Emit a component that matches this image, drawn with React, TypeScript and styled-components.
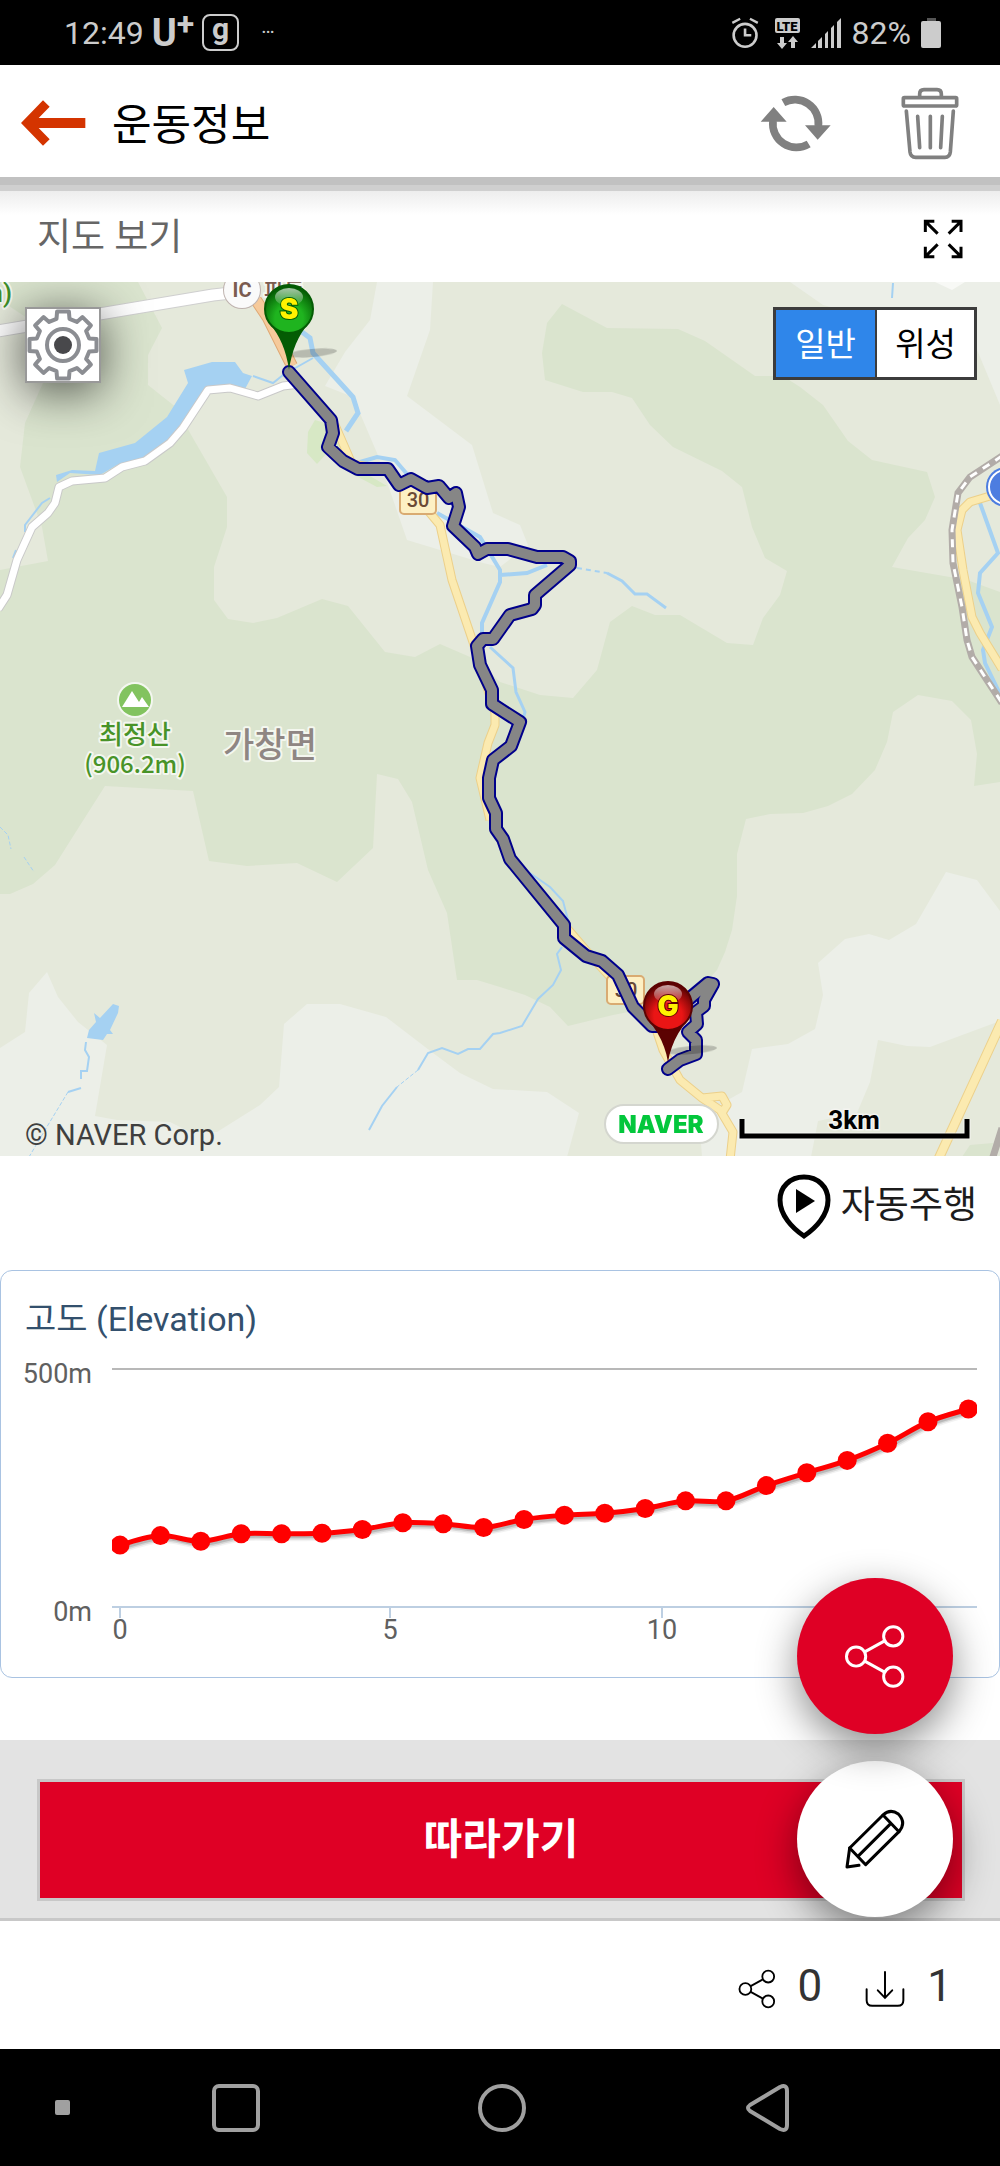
import React, { useState } from "react";
import styled, { createGlobalStyle } from "styled-components";

const sans = `Roboto, "Noto Sans CJK KR", sans-serif`;

const GlobalStyle = createGlobalStyle`
  *, *::before, *::after { box-sizing: border-box; }
  body { margin: 0; background: #fff; font-family: ${sans}; }
  button { font: inherit; color: inherit; padding: 0; border: 0; background: none; cursor: pointer; }
  svg { display: block; }
  h1, h2, p { margin: 0; font-weight: 400; }
`;

const Page = styled.div`
  width: 100%;
`;

/* ---------- status bar ---------- */

const StatusBar = styled.div`
  display: flex;
  justify-content: space-between;
  align-items: center;
  height: 65px;
  padding: 0 58px 0 64px;
  background: #000;
  color: #ccc;
  font-size: 32px;
  line-height: 40px;
`;

const StatusGroup = styled.div<{ $gap: number }>`
  display: flex;
  align-items: center;
  gap: ${(p) => p.$gap}px;
`;

const Carrier = styled.span`
  display: flex;
  align-items: flex-start;
  font-size: 38px;
  font-weight: 700;
  line-height: 40px;
`;

const CarrierPlus = styled.span`
  font-size: 32px;
  line-height: 22px;
`;

const AppBadge = styled.span`
  width: 37px;
  height: 37px;
  border: 2px solid #ccc;
  border-radius: 8px;
  font-size: 30px;
  font-weight: 700;
  line-height: 26px;
  text-align: center;
`;

const More = styled.span`
  padding: 0 0 14px 14px;
  font-size: 20px;
  line-height: 24px;
`;

/* ---------- header ---------- */

const Header = styled.header`
  display: flex;
  align-items: center;
  height: 120px;
  padding: 4px 41px 0 20px;
  border-bottom: 8px solid #c1c1c1;
`;

const Title = styled.h1`
  flex: 1;
  padding: 4px 0 0 24px;
  color: #000;
  font-size: 43px;
  line-height: 60px;
`;

const HeaderActions = styled.div`
  display: flex;
  align-items: center;
  gap: 69px;
`;

const SectionBar = styled.div`
  display: flex;
  justify-content: space-between;
  align-items: center;
  height: 97px;
  padding: 4px 37px 0;
  border-top: 6px solid #cfcfcf;
  background: linear-gradient(#ededed, #fff 24px);
`;

const SectionTitle = styled.h2`
  height: 50px;
  color: #666;
  font-size: 37px;
  line-height: 48px;
`;

/* ---------- map ---------- */

const MapBox = styled.section`
  position: relative;
  overflow: hidden;
`;

const MapSvg = styled.svg`
  width: 100%;
  height: auto;
`;

const SettingsButton = styled.button`
  position: absolute;
  top: 25px;
  left: 25px;
  width: 76px;
  height: 76px;
  border: 2px solid #999;
  background: #fff;
  box-shadow: 0 8px 48px rgba(0, 0, 0, 0.65);
`;

const MapTypes = styled.div`
  position: absolute;
  top: 25px;
  right: 23px;
  display: flex;
  border: 3px solid #3c3c3c;
`;

const MapType = styled.button<{ $on: boolean }>`
  width: 99px;
  height: 67px;
  padding-top: 2px;
  background: ${(p) => (p.$on ? "#2f86ea" : "#fff")};
  color: ${(p) => (p.$on ? "#fff" : "#000")};
  font-size: 33px;
  line-height: 48px;

  & + & {
    border-left: 2px solid #3c3c3c;
  }
`;

const Copyright = styled.p`
  position: absolute;
  left: 25px;
  bottom: 4px;
  color: #3f3f3f;
  font-size: 29px;
  line-height: 34px;
`;

const AutoRow = styled.div`
  display: flex;
  justify-content: flex-end;
  height: 114px;
  padding: 0 23px 14px;
`;

const AutoButton = styled.button`
  display: flex;
  align-items: center;
  gap: 10px;
  color: #1c1c1c;
  font-size: 37px;
  line-height: 48px;
`;

/* ---------- elevation ---------- */

const Card = styled.section`
  margin-bottom: 62px;
  padding-top: 26px;
  border: 1px solid #a9c3e2;
  border-radius: 12px;
`;

const CardTitle = styled.h2`
  padding-left: 24px;
  color: #33506d;
  font-size: 34px;
  line-height: 44px;
`;

const ChartSvg = styled.svg`
  width: 100%;
  height: auto;
`;

/* ---------- bottom ---------- */

const Content = styled.main`
  position: relative;
  overflow: hidden;
`;

const FollowBar = styled.div`
  display: flex;
  padding: 39px 35px 17px 37px;
  border-bottom: 3px solid #c8c8c8;
  background: #e3e3e3;
`;

const FollowButton = styled.button`
  flex: 1;
  height: 122px;
  border: 3px solid #c8c8c8;
  background: #df0025;
  color: #fff;
  font-size: 42px;
  font-weight: 700;
  line-height: 60px;
`;

const FabStack = styled.div`
  position: absolute;
  right: 47px;
  bottom: 4px;
  display: flex;
  flex-direction: column;
  gap: 27px;
`;

const Fab = styled.button<{ $primary?: boolean }>`
  position: relative;
  z-index: ${(p) => (p.$primary ? 1 : 0)};
  display: grid;
  place-items: center;
  width: 156px;
  height: 156px;
  border-radius: 50%;
  background: ${(p) => (p.$primary ? "#df0025" : "#fff")};
  color: ${(p) => (p.$primary ? "#fff" : "#000")};
  box-shadow: 0 14px 40px rgba(0, 0, 0, 0.45);
`;

const Stats = styled.div`
  display: flex;
  justify-content: flex-end;
  gap: 43px;
  height: 128px;
  padding-right: 48px;
`;

const Stat = styled.span`
  display: flex;
  align-items: center;
  gap: 22px;
  padding-top: 8px;
  color: #000;
`;

const StatCount = styled.span`
  height: 60px;
  color: #333;
  font-size: 44px;
  line-height: 54px;
`;

const SystemNav = styled.nav`
  display: grid;
  grid-template-columns: 103px 1fr 1fr 1fr;
  align-items: center;
  height: 117px;
  padding-right: 99px;
  background: #000;
`;

const NavButton = styled.button`
  display: grid;
  place-items: center;
  height: 100%;
`;

const NavDot = styled.span`
  justify-self: center;
  width: 15px;
  height: 15px;
  margin-left: 21px;
  border-radius: 2px;
  background: #a0a0a0;
`;

/* ---------- icons ---------- */

const AlarmIcon = () => (
  <svg width="34" height="32" viewBox="700 47 104 98" fill="none" stroke="#ccc" strokeWidth="8">
    <circle cx="743" cy="103" r="35" />
    <path d="M743 82V103H762" />
    <path d="M704 65L728 52M758 52L782 65" strokeWidth="7" />
  </svg>
);

const LteIcon = () => (
  <svg width="25" height="32" viewBox="0 0 25 32">
    <rect x="0" y="1" width="25" height="15" rx="2" fill="#ccc" />
    <text x="12" y="14" textAnchor="middle" fontFamily="Roboto, sans-serif" fontSize="13" fontWeight="900" fill="#000">
      LTE
    </text>
    <path d="M5 20h4v6h3l-5 6-5-6h3zM16 31h4v-6h3l-5-6-5 6h3z" fill="#ccc" />
  </svg>
);

const SignalIcon = () => (
  <svg width="32" height="32" viewBox="0 0 32 32" fill="#ccc">
    <path d="M1 31l5-5v5zM8 24l4-4v11h-4zM15 17l3-3v17h-3zM21 11l3-3v23h-3zM27 5l4-4v30h-4z" />
  </svg>
);

const BatteryIcon = () => (
  <svg width="21" height="32" viewBox="0 0 21 32">
    <rect x="6" y="1" width="9" height="4" fill="#555" />
    <rect x="0" y="4" width="20" height="27" rx="2" fill="#ccc" />
  </svg>
);

const BackIcon = () => (
  <svg width="68" height="48" viewBox="62 299 204 144">
    <path d="M65 371L131 303L151 322L118 356H258V386H118L151 420L131 439Z" fill="#d43400" />
  </svg>
);

const RefreshIcon = () => (
  <svg width="73" height="57" viewBox="777 286 219 171" fill="none" stroke="#808080" strokeWidth="23">
    <path d="M850 309A71 71 0 0 1 955 380" />
    <path d="M926 433A71 71 0 0 1 819 363" />
    <path d="M915 377H992L953 420ZM782 366H860L821 322Z" fill="#808080" stroke="none" />
  </svg>
);

const TrashIcon = () => (
  <svg width="58" height="73" viewBox="1206 259 174 219" fill="none" stroke="#808080" strokeWidth="11" strokeLinecap="round">
    <path d="M1262 287V280Q1262 267 1275 267H1314Q1327 267 1327 280V287" strokeLinecap="butt" />
    <rect x="1213" y="291" width="160" height="25" rx="3" />
    <path d="M1222 331L1233 454Q1235 470 1250 470H1338Q1352 470 1354 454L1363 331" />
    <path d="M1256 347L1262 441M1294 347V441M1330 347L1325 441" />
  </svg>
);

const ExpandIcon = () => (
  <svg width="40" height="40" viewBox="1270 657 120 120" fill="none" stroke="#000" strokeWidth="9">
    <path d="M1304 664H1277V696M1277 664L1314 701" />
    <path d="M1356 664H1384V696M1384 664L1347 701" />
    <path d="M1304 770H1277V740M1277 770L1314 733" />
    <path d="M1356 770H1384V740M1384 770L1347 733" />
  </svg>
);

const gearPath = (() => {
  const c = 36;
  const steps: [number, number][] = [
    [-14, 27],
    [-10, 34],
    [10, 34],
    [14, 27],
  ];
  const pts: string[] = [];
  for (let t = 0; t < 8; t++) {
    for (const [deg, r] of steps) {
      const a = ((t * 45 + deg) * Math.PI) / 180;
      pts.push(`${(c + r * Math.sin(a)).toFixed(1)} ${(c - r * Math.cos(a)).toFixed(1)}`);
    }
  }
  return `M${pts.join("L")}Z`;
})();

const GearIcon = () => (
  <svg width="72" height="72" viewBox="0 0 72 72" fill="none" stroke="#8b8d92" strokeWidth="4" strokeLinejoin="round">
    <path d={gearPath} />
    <circle cx="36" cy="36" r="16" />
    <circle cx="36" cy="36" r="9" fill="#48484b" stroke="none" />
  </svg>
);

const AutoPinIcon = () => (
  <svg width="54" height="65" viewBox="0 0 54 65">
    <path
      d="M27 3C13 3 3 13 3 26C3 41 15 54 27 62C39 54 51 41 51 26C51 13 41 3 27 3Z"
      fill="none"
      stroke="#000"
      strokeWidth="5"
    />
    <path d="M19 15L38 27L19 39Z" fill="#000" />
  </svg>
);

const ShareIcon = ({ width, height, stroke }: { width: number; height: number; stroke: number }) => (
  <svg width={width} height={height} viewBox="1034 1124 186 196" fill="none" stroke="currentColor" strokeWidth={stroke}>
    <circle cx="1070" cy="1222" r="29" />
    <circle cx="1182" cy="1161" r="29" />
    <circle cx="1182" cy="1283" r="29" />
    <path d="M1096 1208L1156 1175M1096 1236L1156 1269" />
  </svg>
);

const PencilIcon = () => (
  <svg
    width="62"
    height="62"
    viewBox="1033 325 186 186"
    fill="none"
    stroke="currentColor"
    strokeWidth="9"
    strokeLinejoin="round"
    strokeLinecap="round"
  >
    <path d="M1050 445L1150 346Q1172 326 1196 343Q1221 369 1198 396L1098 495Z" />
    <path d="M1150 346L1198 396M1077 468L1170 375" />
    <path d="M1050 445L1042 502L1078 497" />
  </svg>
);

const DownloadIcon = () => (
  <svg width="40" height="40" viewBox="1094 808 122 120" fill="none" stroke="currentColor" strokeWidth="6" strokeLinecap="round">
    <path d="M1099 869V902Q1099 919 1116 919H1194Q1211 919 1211 902V869" />
    <path d="M1155 816V893M1133 872L1155 895L1177 872" />
  </svg>
);

/* ---------- map drawing ---------- */

const route =
  "M289 372L331 420L333 433L328 447L343 461L358 469H388L399 485L411 479L427 488L439 486L449 498L456 493L459 507L453 526L475 547L478 554L487 549H508L537 557H563L570 561V565L535 595V605L532 609L510 615L493 639H483L477 646L480 665L492 690V704L520 722L511 746L493 760L489 778V798L496 813V829L503 839L510 859L564 925V938L586 956L602 961L618 975L633 1007L652 1026H663L690 998L708 983L713 984L704 1000V1006L696 1012L697 1024L688 1032L696 1040V1054L680 1060L668 1069";

const Pin = ({
  cx,
  cy,
  tip,
  dark,
  bright,
  id,
  letter,
}: {
  cx: number;
  cy: number;
  tip: number;
  dark: string;
  bright: string;
  id: string;
  letter: string;
}) => (
  <g>
    <defs>
      <radialGradient id={id} cx="50%" cy="70%" r="65%">
        <stop offset="0" stopColor={bright} />
        <stop offset="0.45" stopColor={bright} />
        <stop offset="1" stopColor={dark} />
      </radialGradient>
      <linearGradient id={`${id}-shine`} x1="0" y1="0" x2="0" y2="1">
        <stop offset="0" stopColor="#fff" stopOpacity="0.65" />
        <stop offset="1" stopColor="#fff" stopOpacity="0.1" />
      </linearGradient>
    </defs>
    <path d={`M${cx - 20} ${cy + 14}Q${cx - 4} ${cy + 32} ${cx} ${tip}Q${cx + 4} ${cy + 32} ${cx + 20} ${cy + 14}Z`} fill={dark} />
    <circle cx={cx} cy={cy} r="24" fill={`url(#${id})`} stroke={dark} strokeWidth="2" />
    <ellipse cx={cx} cy={cy - 12} rx="14" ry="9" fill={`url(#${id}-shine)`} />
    <text
      x={cx}
      y={cy + 10}
      textAnchor="middle"
      fontFamily="Inter, sans-serif"
      fontSize="28"
      fontWeight="900"
      fill="#fff200"
      stroke={dark}
      strokeWidth="2"
      paintOrder="stroke"
    >
      {letter}
    </text>
  </g>
);

const Road = ({ d, width, fill, edge }: { d: string; width: number; fill: string; edge: string }) => (
  <g fill="none" strokeLinejoin="round">
    <path d={d} stroke={edge} strokeWidth={width + 2} />
    <path d={d} stroke={fill} strokeWidth={width} />
  </g>
);

const yellow = { fill: "#fbeab0", edge: "#ecd08a" };

const CourseMap = () => (
  <MapSvg viewBox="0 282 1000 874" role="img" aria-label="코스 지도">
    <rect x="0" y="282" width="1000" height="875" fill="#e5e9db" />
    {/* wooded areas */}
    <g fill="#dae4ce">
      <path d="M0 282H138L162 328L148 355V385L177 408L190 433L227 497V527L214 567V600L228 619L253 623L277 618L322 599L348 606L385 652L415 657L440 644L477 660L500 682L540 695L573 698L597 670L610 622L632 606L655 615L680 615L727 643L753 645L763 618L780 595L787 571L765 558L752 527L742 487L722 471L673 447L650 425L632 398L612 392H583L545 380L542 353L547 323L562 304L607 328L678 329L705 341L755 376H783L800 387L823 405L848 441L872 460L927 472L935 497L925 520L908 538L892 567L967 580L1000 592V782L974 786L977 754L971 720L952 701L918 695L893 712L887 742L875 770L852 794L828 806L803 813L770 814L746 819L737 854V896L732 930L725 952L717 970L690 1000L613 1015L568 1026L550 1007L525 995L500 987L477 980H457L447 913L428 870L412 802L398 779L377 774L373 848L337 882L297 863L247 866L209 861L193 791L105 786L72 838L55 865L33 884L10 894H0V570L48 561L42 527L20 467L25 423L43 383L30 320L0 300Z" />
      <path d="M962 1157L970 1145L993 1143L990 1157Z" />
    </g>
    <path d="M315 420L308 432L307 453L317 464L327 453L347 471L377 487L387 486L353 466L325 423Z" fill="#d7e8c5" />
    {/* open ground */}
    <g fill="#ecefe8">
      <path d="M377 282L370 320L345 352L325 386L353 397L377 453L407 540L483 563L500 567L528 545L520 525L493 513L472 445L407 396L430 330L433 282Z" />
      <path d="M790 282L823 305L975 345L1000 405V282Z" />
      <path d="M0 1048L25 1032L29 993L47 972L58 997L78 1022L107 1045L95 1116L117 1120L170 1122L190 1132H217L260 1105L279 1087L284 1024L307 1004H340L386 1017L433 1053L460 1073L493 1089L547 1092L579 1113L567 1157H0Z" />
      <path d="M946 872L977 880L1000 911V1021L930 1047L907 1046L878 1040L870 1082L857 1113L818 1121L811 1157H702L701 1143L710 1110L742 1092L752 1049L788 1044L815 1029L823 995L818 963L845 939L869 934L889 940L916 924Z" />
    </g>
    <path d="M935 282L952 290L965 282Z" fill="#f8f9f6" />
    {/* lakes and streams */}
    <g fill="#a5d1f2">
      <path d="M184 370L212 362H235L243 373L252 376L245 389L207 387L182 428L167 445L143 462L117 465L100 475L70 473L57 482L56 475L72 470L95 471L99 453L135 443L167 417L188 383Z" />
      <path d="M113 1004L119 1006L118 1013L110 1030L113 1034H107L103 1040L87 1038L89 1030L96 1022L94 1013L100 1018Z" />
    </g>
    <g fill="none" stroke="#a5d1f2" strokeWidth="4">
      <path d="M302 332L310 338L313 353L353 397L358 413L346 431" strokeWidth="5" />
      <path d="M360 462L377 457L395 460L407 474M437 513L480 537L500 570V582L482 623V634M500 575L527 573L547 565" />
      <path d="M253 376L273 383L283 375L313 358" strokeWidth="2" />
      <path d="M577 568L607 573" strokeWidth="2" strokeDasharray="5 4" />
      <path d="M607 573L622 581L635 594H647L666 608M490 647L513 668L516 692L525 712L523 719" strokeWidth="3" />
      <path d="M980 503L998 553L980 573L978 593L992 627L983 650L985 663L1000 694" />
      <path d="M893 283L892 298M527 871L550 887L563 901L568 920M562 947L557 954L561 970L553 985L538 999L522 1026L500 1033L493 1034L480 1049H468L458 1054L442 1048L428 1053L418 1070M397 1087L382 1106L369 1130M86 1042L85 1050L89 1057L87 1071H81V1079M81 1088L68 1092M50 498L42 503L25 525V532M16 550L13 558" strokeWidth="2" />
      <path d="M418 1070L397 1087M68 1092L48 1125L29 1157M0 827L8 835L11 849M24 857L34 872" strokeWidth="1" strokeDasharray="4 2" />
    </g>
    {/* roads */}
    <Road d="M-2 609L7 595L17 560L32 527L48 513L55 503L59 487L72 481L105 478L122 467L145 461L170 443L183 428L208 390L230 388L258 396L283 386L300 384" width={7} fill="#fff" edge="#c9c9c9" />
    <Road d="M-2 331L213 295L240 292" width={11} fill="#fff" edge="#cfcfcf" />
    <Road d="M256 300L268 318L292 366" width={10} fill="#f6ca9b" edge="#dfa874" />
    <Road d="M335 425L352 464L388 470L430 513L440 525L452 580L474 645L495 713V725L488 743L480 778L490 820M560 920L590 955L655 1026L663 1050L680 1080L702 1098L720 1110L733 1132L730 1160M702 1098L722 1096L727 1105L722 1113" width={7} {...yellow} />
    <Road d="M1002 1021L938 1160" width={8} {...yellow} />
    <Road d="M990 496L970 502L962 510L957 530L963 570L972 617L980 633L1002 669" width={7} {...yellow} />
    <g fill="none">
      <path d="M1002 456L970 477L958 493L952 530L953 563L962 607L967 640L972 657L1002 703M1002 1128L992 1160" stroke="#b2aca8" strokeWidth="7" />
      <path d="M1002 456L970 477L958 493L952 530L953 563L962 607L967 640L972 657L1002 703" stroke="#fff" strokeWidth="3" strokeDasharray="8 7" />
    </g>
    <circle cx="1006" cy="487" r="20" fill="#4d7de0" />
    <circle cx="1006" cy="487" r="17" fill="none" stroke="#fff" strokeWidth="2" />
    {/* place labels */}
    <g fontFamily={`Roboto, "Noto Sans CJK KR", sans-serif`} fontWeight="500" paintOrder="stroke" stroke="#f4f7ef" strokeWidth="4" strokeLinejoin="round">
      <text x="264" y="298" fontSize="22" fill="#7b5c50">파동</text>
      <circle cx="242" cy="290" r="18" fill="#fafafa" stroke="#bfb3af" strokeWidth="2" />
      <text x="242" y="297" textAnchor="middle" fontSize="20" fontWeight="700" fill="#7b5c50" stroke="none">IC</text>
      <text x="12" y="302" textAnchor="end" fontSize="26" fill="#3e8f28">m)</text>
      <g fontFamily={`"Noto Sans CJK KR", sans-serif`} textAnchor="middle" fill="#489328">
        <text x="135" y="744" fontSize="26">최정산</text>
        <text x="135" y="773" fontSize="24">(906.2m)</text>
      </g>
      <text x="270" y="757" textAnchor="middle" fontSize="34" fill="#8f8683">가창면</text>
    </g>
    <circle cx="135" cy="700" r="18" fill="#fff" opacity="0.7" />
    <circle cx="135" cy="700" r="16" fill="#82c35f" />
    <path d="M122 707L132 691L139 702L142 697L149 707Z" fill="#fff" />
    <g fontFamily="Roboto, sans-serif" fontSize="20" fontWeight="500" textAnchor="middle">
      <rect x="400" y="484" width="36" height="30" rx="4" fill="#fdf0c4" stroke="#d9ab72" strokeWidth="2" />
      <text x="418" y="507" fill="#6b4a35">30</text>
      <rect x="607" y="976" width="37" height="28" rx="4" fill="#fdf0c4" stroke="#d9ab72" strokeWidth="2" />
      <text x="626" y="997" fill="#6b4a35">30</text>
    </g>
    {/* recorded course */}
    <g fill="none" strokeLinejoin="round" strokeLinecap="round">
      <path d={route} stroke="#00008b" strokeWidth="14" />
      <path d={route} stroke="#868686" strokeWidth="10" />
    </g>
    <g fill="#000" opacity="0.2">
      <ellipse cx="312" cy="353" rx="25" ry="4" transform="rotate(-5 312 353)" />
      <ellipse cx="692" cy="1050" rx="25" ry="4" transform="rotate(-5 692 1050)" />
    </g>
    <Pin id="start" cx={289} cy={309} tip={370} dark="#045c04" bright="#1fb41f" letter="S" />
    <Pin id="goal" cx={668} cy={1006} tip={1062} dark="#5c0202" bright="#ea1515" letter="G" />
    {/* provider mark and scale */}
    <rect x="605" y="1105" width="113" height="38" rx="19" fill="#fff" stroke="#d4d6cf" strokeWidth="2" />
    <text x="661" y="1133" textAnchor="middle" fontFamily="Inter, sans-serif" fontSize="24" fontWeight="900" fill="#03c73c">
      NAVER
    </text>
    <path d="M742 1119V1136H967V1119" fill="none" stroke="#fff" strokeWidth="7" opacity="0.6" />
    <path d="M742 1119V1136H967V1119" fill="none" stroke="#000" strokeWidth="5" />
    <text x="854" y="1129" textAnchor="middle" fontFamily="Roboto, sans-serif" fontSize="26" fontWeight="700" fill="#000" stroke="#f4f4f0" strokeWidth="3" paintOrder="stroke">
      3km
    </text>
  </MapSvg>
);

/* ---------- elevation chart ---------- */

const elevation = [130, 150, 138, 154, 154, 155, 163, 177, 175, 167, 184, 193, 197, 207, 223, 223, 255, 282, 308, 344, 389, 416];

const chart = { left: 120, step: 40.4, zero: 266, top: 28, max: 500 };

const points = elevation.map((m, i) => ({
  x: chart.left + i * chart.step,
  y: chart.zero - (m / chart.max) * (chart.zero - chart.top),
}));

const curve = points.reduce((d, p, i) => {
  if (i === 0) return `M${p.x} ${p.y}`;
  const a = points[i - 1];
  const before = points[i - 2] ?? a;
  const after = points[i + 1] ?? p;
  return `${d}C${a.x + (p.x - before.x) / 6} ${a.y + (p.y - before.y) / 6} ${p.x - (after.x - a.x) / 6} ${p.y - (after.y - a.y) / 6} ${p.x} ${p.y}`;
}, "");

const ticks = [
  { label: "0", x: 120 },
  { label: "5", x: 390 },
  { label: "10", x: 662 },
];

const ElevationChart = () => (
  <ChartSvg viewBox="1 0 998 336" role="img" aria-label="고도 그래프">
    <defs>
      <clipPath id="plot">
        <rect x="112" y="0" width="865" height="280" />
      </clipPath>
    </defs>
    <path d="M112 28H977" stroke="#b8b8b8" strokeWidth="2" />
    <path d="M112 266H977" stroke="#bdcfe2" strokeWidth="2" />
    <g fontFamily="Roboto, sans-serif" fontSize="27" fill="#606060">
      <text x="92" y="42" textAnchor="end">500m</text>
      <text x="92" y="280" textAnchor="end">0m</text>
      {ticks.map((t) => (
        <g key={t.label}>
          <path d={`M${t.x} 266V277`} stroke="#bdcfe2" strokeWidth="2" />
          <text x={t.x} y="298" textAnchor="middle">{t.label}</text>
        </g>
      ))}
    </g>
    <g clipPath="url(#plot)" fill="none">
      <g stroke="#000" transform="translate(2 3)">
        <path d={curve} strokeWidth="9" strokeOpacity="0.05" />
        <path d={curve} strokeWidth="6" strokeOpacity="0.1" />
        <path d={curve} strokeWidth="3" strokeOpacity="0.15" />
      </g>
      <path d={curve} stroke="#f00" strokeWidth="5" />
      {points.map((p) => (
        <circle key={p.x} cx={p.x} cy={p.y} r="9.5" fill="#f00" />
      ))}
    </g>
  </ChartSvg>
);

export default function App() {
  const [mapType, setMapType] = useState("일반");

  return (
    <Page>
      <GlobalStyle />
      <StatusBar>
        <StatusGroup $gap={8}>
          <span>12:49</span>
          <Carrier>
            U<CarrierPlus>+</CarrierPlus>
          </Carrier>
          <AppBadge>g</AppBadge>
          <More>…</More>
        </StatusGroup>
        <StatusGroup $gap={10}>
          <AlarmIcon />
          <LteIcon />
          <SignalIcon />
          <span>82%</span>
          <BatteryIcon />
        </StatusGroup>
      </StatusBar>

      <Header>
        <button aria-label="뒤로">
          <BackIcon />
        </button>
        <Title>운동정보</Title>
        <HeaderActions>
          <button aria-label="새로고침">
            <RefreshIcon />
          </button>
          <button aria-label="삭제">
            <TrashIcon />
          </button>
        </HeaderActions>
      </Header>

      <Content>
        <SectionBar>
          <SectionTitle>지도 보기</SectionTitle>
          <button aria-label="전체 화면">
            <ExpandIcon />
          </button>
        </SectionBar>

        <MapBox>
          <CourseMap />
          <SettingsButton aria-label="지도 설정">
            <GearIcon />
          </SettingsButton>
          <MapTypes>
            {["일반", "위성"].map((type) => (
              <MapType key={type} $on={type === mapType} aria-pressed={type === mapType} onClick={() => setMapType(type)}>
                {type}
              </MapType>
            ))}
          </MapTypes>
          <Copyright>© NAVER Corp.</Copyright>
        </MapBox>

        <AutoRow>
          <AutoButton>
            <AutoPinIcon />
            자동주행
          </AutoButton>
        </AutoRow>

        <Card>
          <CardTitle>고도 (Elevation)</CardTitle>
          <ElevationChart />
        </Card>

        <FollowBar>
          <FollowButton>따라가기</FollowButton>
        </FollowBar>

        <FabStack>
          <Fab $primary aria-label="공유">
            <ShareIcon width={62} height={65} stroke={9} />
          </Fab>
          <Fab aria-label="편집">
            <PencilIcon />
          </Fab>
        </FabStack>
      </Content>

      <Stats>
        <Stat>
          <ShareIcon width={38} height={40} stroke={9} />
          <StatCount>0</StatCount>
        </Stat>
        <Stat>
          <DownloadIcon />
          <StatCount>1</StatCount>
        </Stat>
      </Stats>

      <SystemNav>
        <NavDot />
        <NavButton aria-label="최근 앱">
          <svg width="48" height="48" viewBox="0 0 48 48" fill="none" stroke="#a0a0a0" strokeWidth="4">
            <rect x="2" y="2" width="44" height="44" rx="5" />
          </svg>
        </NavButton>
        <NavButton aria-label="홈">
          <svg width="48" height="48" viewBox="0 0 48 48" fill="none" stroke="#a0a0a0" strokeWidth="4">
            <circle cx="24" cy="24" r="22" />
          </svg>
        </NavButton>
        <NavButton aria-label="이전">
          <svg width="44" height="48" viewBox="0 0 44 48" fill="none" stroke="#a0a0a0" strokeWidth="4" strokeLinejoin="round">
            <path d="M4 21L34 3Q41 0 41 7V41Q41 48 34 45L4 27Q0 24 4 21Z" />
          </svg>
        </NavButton>
      </SystemNav>
    </Page>
  );
}
